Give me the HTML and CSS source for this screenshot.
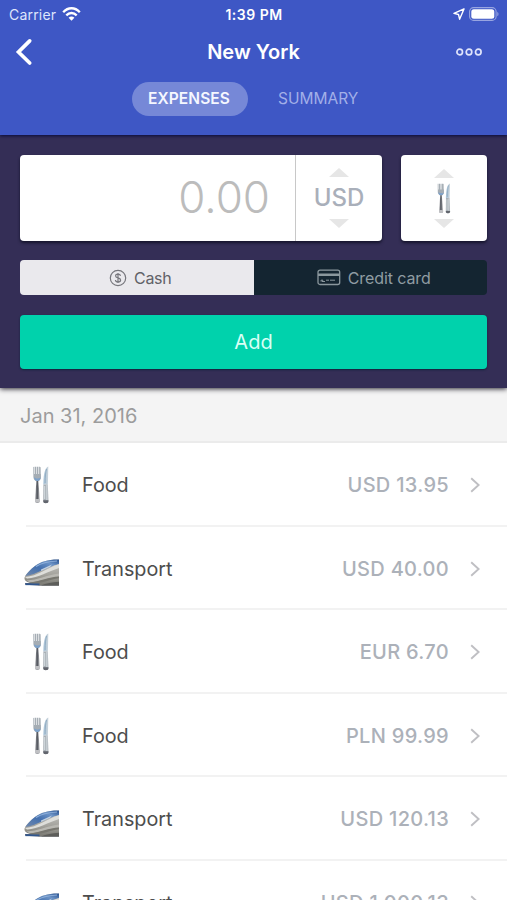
FILE: index.html
```html
<!DOCTYPE html>
<html lang="en">
<head>
<meta charset="utf-8">
<title>New York</title>
<link rel="stylesheet" href="styles.css">
</head>
<body>
<svg class="defs" aria-hidden="true">
  <defs>
    <linearGradient id="handle" x1="0" x2="1" y1="0" y2="0"><stop offset="0" stop-color="#b9b9bd"/><stop offset=".45" stop-color="#4b4f57"/><stop offset="1" stop-color="#c9cacd"/></linearGradient>
    <linearGradient id="blade" x1="0" x2="1" y1="0" y2="0"><stop offset="0" stop-color="#a9c3d8"/><stop offset="1" stop-color="#c9d3da"/></linearGradient>
    <linearGradient id="roof" x1="0" x2="1" y1="1" y2="0"><stop offset="0" stop-color="#7189ad"/><stop offset=".45" stop-color="#4470ae"/><stop offset=".75" stop-color="#6c93c6"/><stop offset="1" stop-color="#28518f"/></linearGradient>
    <linearGradient id="side" x1="0" x2="0" y1="0" y2="1"><stop offset="0" stop-color="#c9c9c5"/><stop offset=".6" stop-color="#a3a29c"/><stop offset="1" stop-color="#77766f"/></linearGradient>
    <symbol id="food" viewBox="0 0 16 38">
      <path d="M.3 1 1.200.8V8h.6V.8h1.300V8h.6V.8h1.300V8h.6V.8h1.300V8h.3V1l.6.2.2 9.800C8.200 13 7 14.500 5.300 15.300H3.300C1.500 14.300.4 13 .4 11Z" fill="#a5adb4"/>
      <path d="M1 11.200c.3 2 1.200 3.400 2.500 3.900h1.700c1.300-.6 2.100-1.900 2.400-3.600-1.600 1.500-4.500 1.500-6.600-.3Z" fill="#7da2cb"/>
      <path d="M3.400 15h1.900l.7 8 .9 12c.1 2.500-5 2.500-4.900 0l.8-12Z" fill="url(#handle)"/>
      <path d="M2 33h4.900v2.500c-.3 1.800-4.700 1.800-4.900 0Z" fill="#bfc0c3"/>
      <path d="M15.300.5C12.500 1.500 10.500 6 10.300 18.500h4.600Z" fill="url(#blade)"/>
      <path d="M13.600 3c-1 3-1.500 8-1.500 14" stroke="#7f9fb9" stroke-width=".7" fill="none"/>
      <path d="M10.400 18.500h4.400l.7 17c-.4 2.200-5 2.200-5.300 0Z" fill="#a9b0b6"/>
      <path d="M11.700 20v13M13.900 19v15" stroke="#dce3e8" stroke-width=".9"/>
      <path d="M10.200 34.300h5.300l-.3 2c-1 1.200-3.800 1.200-4.700 0Z" fill="#62656d"/>
    </symbol>
    <symbol id="train" viewBox="0 0 35 27">
      <path d="M1 24h34v2.500H13L1.200 25.700Z" fill="#55657f"/>
      <path d="M35 .5C24 .3 17 2.500 11 7 6 11 1.500 15.500.4 19c0 2.500 2 4 5 4.800L15 26.500H35Z" fill="url(#side)"/>
      <path d="M35 .5C24 .3 17 2.500 11 7 6.500 10.500 3 14 1.300 17 13 15.500 22 8 35 5Z" fill="url(#roof)"/>
      <path d="M12 7.500C18 3.500 24 2.500 33 2" stroke="#8fb0da" stroke-width="1.200" fill="none"/>
      <path d="M1 18C14 17 22 9 35 5.200V9C24 12.500 15 18.500 3 19.500Z" fill="#dededa"/>
      <path d="M17 10.500 28 5.500l-2 2.500-9 4Z" fill="#c2d0df"/>
      <path d="M2.500 21.500C14 21 22 16 35 14.500v3C24 19 17 22.500 6 23.500Z" fill="#b9b8b2"/>
      <path d="M5 23.700C16 22.500 25 18 35 17.500v1.800C26 20.500 19 24 9 24.600Z" fill="#77766f"/>
      <path d="M17 26.500c5-2 11-3.500 18-3.700v3.700Z" fill="#5d5d5a"/>
      <path d="M1.500 25.300h14" stroke="#30568d" stroke-width="1.700"/>
    </symbol>
    <symbol id="next" viewBox="0 0 10 16">
      <path d="M1.200 1.200 8.600 8l-7.400 6.800" fill="none" stroke="#bfbfc3" stroke-width="1.900"/>
    </symbol>
  </defs>
</svg>
<header class="top">
  <div class="status">
    <div class="carrier"><span>Carrier</span>
      <svg width="19" height="14" viewBox="0 0 19 14" fill="none" stroke="#fff" stroke-width="2.300"><path d="M1.200 5.200C6-.1 13-.1 17.800 5.200"/><path d="M4.300 8.400c3.100-3.200 7.300-3.200 10.400 0"/><path d="m6.600 10.700c1.700-1.600 4.100-1.600 5.800 0L9.500 13.700Z" fill="#fff" stroke="none"/></svg>
    </div>
    <div class="clock">1:39 PM</div>
    <div class="device">
      <svg width="12" height="12" viewBox="0 0 12 12"><path d="M11 .9 1 5.400l4.500 1.100 1.100 4.700Z" fill="none" stroke="#fff" stroke-width="1.400" stroke-linejoin="round"/></svg>
      <svg width="30" height="14" viewBox="0 0 30 14"><rect x=".6" y=".6" width="26.500" height="12.800" rx="4" fill="none" stroke="#98a5e1" stroke-width="1.100"/><rect x="2.300" y="2.200" width="23" height="9.600" rx="2.500" fill="#fff"/><path d="M28.300 4.700c1.600.8 1.600 3.800 0 4.600Z" fill="#98a5e1"/></svg>
    </div>
  </div>
  <div class="nav">
    <svg class="back" width="18" height="28" viewBox="0 0 18 28"><path d="M14.700 2.900 3.500 14l11.200 11" fill="none" stroke="#fff" stroke-width="3.700" stroke-linecap="round"/></svg>
    <h1>New York</h1>
    <svg class="more" width="28" height="10" viewBox="0 0 28 10" fill="none" stroke="#dfe4fb" stroke-width="1.700"><circle cx="4.700" cy="5" r="2.800"/><circle cx="14" cy="5" r="2.800"/><circle cx="23.300" cy="5" r="2.800"/></svg>
  </div>
  <nav class="tabs"><span class="tab active">EXPENSES</span><span class="tab">SUMMARY</span></nav>
</header>
<section class="entry">
  <div class="fields">
    <div class="money">
      <div class="value">0.00</div>
      <div class="picker currency"><i class="up"></i><span>USD</span><i class="down"></i></div>
    </div>
    <div class="picker category"><i class="up"></i><svg width="14" height="31"><use href="#food"/></svg><i class="down"></i></div>
  </div>
  <div class="methods">
    <div class="method cash">
      <svg width="18" height="18" viewBox="0 0 18 18" fill="none" stroke="#77777d" stroke-width="1.200"><circle cx="9" cy="9" r="7.700"/><path d="M11.500 6.900c-.2-1.200-1.100-1.800-2.500-1.800s-2.400.7-2.400 1.900c0 2.700 5 1.200 5 4 0 1.200-1 2-2.600 2s-2.500-.8-2.600-2M9 3.900v10.200"/></svg>
      <span>Cash</span>
    </div>
    <div class="method card">
      <svg width="24" height="17" viewBox="0 0 24 17" fill="none" stroke="#8a979d" stroke-width="1.300"><rect x="1" y="1.200" width="21.700" height="14.300" rx="2"/><path d="M1 5.700h22" stroke-width="2.400"/><path d="M4 12.500v-1.300h2l-1 1.300h3M9 11.200h3m1 0h5" stroke-width="1"/></svg>
      <span>Credit card</span>
    </div>
  </div>
  <button class="add">Add</button>
</section>
<main>
  <h2 class="date">Jan 31, 2016</h2>
  <ul class="list">
    <li><svg class="pic food"><use href="#food"/></svg><span class="name">Food</span><span class="sum">USD 13.95</span><svg class="next"><use href="#next"/></svg></li>
    <li><svg class="pic train"><use href="#train"/></svg><span class="name">Transport</span><span class="sum">USD 40.00</span><svg class="next"><use href="#next"/></svg></li>
    <li><svg class="pic food"><use href="#food"/></svg><span class="name">Food</span><span class="sum">EUR 6.70</span><svg class="next"><use href="#next"/></svg></li>
    <li><svg class="pic food"><use href="#food"/></svg><span class="name">Food</span><span class="sum">PLN 99.99</span><svg class="next"><use href="#next"/></svg></li>
    <li><svg class="pic train"><use href="#train"/></svg><span class="name">Transport</span><span class="sum">USD 120.13</span><svg class="next"><use href="#next"/></svg></li>
    <li><svg class="pic train"><use href="#train"/></svg><span class="name">Transport</span><span class="sum">USD 1,000.13</span><svg class="next"><use href="#next"/></svg></li>
  </ul>
</main>
</body>
</html>
```
FILE: styles.css
```css
* { box-sizing: border-box; }
html, body { margin: 0; height: 900px; overflow: hidden; }
body { width: 507px; background: #fff; font-family: Inter, "Liberation Sans", sans-serif; display: flex; flex-direction: column; }
svg { display: block; flex: none; }
.defs { position: absolute; width: 0; height: 0; }
.top { height: 135px; background: #3e57c5; color: #fff; box-shadow: 0 1px 3px #090b3c; z-index: 2; flex: none; }
.status { height: 28px; display: grid; grid-template-columns: 1fr auto 1fr; align-items: center; padding: 0 8px 0 9px; }
.carrier { display: flex; align-items: center; gap: 6px; font-size: 14px; letter-spacing: .2px; color: #dfe5fc; }
.clock { font-size: 14px; font-weight: 600; letter-spacing: .5px; }
.device { display: flex; align-items: center; justify-content: flex-end; gap: 4px; }
.nav { height: 48px; display: grid; grid-template-columns: 1fr auto 1fr; align-items: center; padding: 0 15px; }
.nav h1 { margin: 0; font-size: 20px; line-height: 24px; font-weight: 600; }
.more { justify-self: end; margin-right: 9px; }
.tabs { display: flex; justify-content: flex-start; padding: 6px 0 0 132px; gap: 14px; }
.tab { height: 34px; line-height: 34px; padding: 0 16px; border-radius: 17px; font-size: 15.500px; color: #a2afe8; }
.tab.active { width: 116px; background: #7688d7; color: #f5f7ff; font-weight: 600; letter-spacing: .1px; }
.entry { height: 253px; background: #342e56; padding: 20px 20px 0; box-shadow: 0 1px 5px #2b2932; z-index: 1; flex: none; }
.fields { display: grid; grid-template-columns: 362px 86px; grid-template-rows: 86px; gap: 19px; height: 85px; }
.money { display: grid; grid-template-columns: 275px 1fr; background: #fff; border-radius: 4px; box-shadow: 0 2px 3px #15142c; }
.value { text-align: right; padding-right: 25px; line-height: 85px; font-size: 44px; font-weight: 300; color: #bcbcbc; }
.picker { display: flex; flex-direction: column; align-items: center; justify-content: center; }
.currency { border-left: 1px solid #c8c8c8; color: #a9afba; font-size: 24px; line-height: 32px; font-weight: 500; gap: 5px; }
.category { background: #fff; border-radius: 4px; gap: 5px; box-shadow: 0 2px 3px #15142c; }
.picker i { width: 0; height: 0; border-left: 10px solid transparent; border-right: 10px solid transparent; }
.picker .up { border-bottom: 9px solid #e6e6e6; }
.picker .down { border-top: 9px solid #e6e6e6; }
.methods { display: grid; grid-template-columns: 1fr 1fr; height: 35px; margin-top: 20px; border-radius: 4px; overflow: hidden; }
.method { display: flex; align-items: center; justify-content: center; gap: 7px; padding-left: 7px; font-size: 16px; }
.cash { background: #eae9ed; color: #626268; letter-spacing: -.3px; }
.card { background: #142531; color: #8f9ca2; letter-spacing: -.1px; }
.add { display: block; width: 100%; height: 54px; margin-top: 20px; border: 0; padding: 0; border-radius: 4px; background: #00d2ac; color: #d8fff5; font: 400 20px Inter, sans-serif; box-shadow: 0 1px 2px #10243d; }
.date { margin: 0; height: 55px; padding-left: 20px; line-height: 56px; background: #f4f4f4; border-bottom: 2px solid #ebebeb; color: #9c9c9c; font-size: 20px; font-weight: 400; }
.list { margin: 0; padding: 0 0 0 26px; list-style: none; }
.list li { height: 83.500px; padding-top: 3px; display: grid; grid-template-columns: 56px 1fr auto 37px; align-items: center; border-bottom: 2px solid #f2f2f2; }
.pic.food { width: 16px; height: 38px; margin-left: 7px; }
.pic.train { width: 35px; height: 27px; margin: 8px 0 0 -2px; }
.name { color: #4d4d4d; font-size: 19.800px; }
.sum { color: #acb1b9; font-size: 20px; font-weight: 500; letter-spacing: .3px; margin-right: 21px; }
.next { width: 10px; height: 16px; }
```
